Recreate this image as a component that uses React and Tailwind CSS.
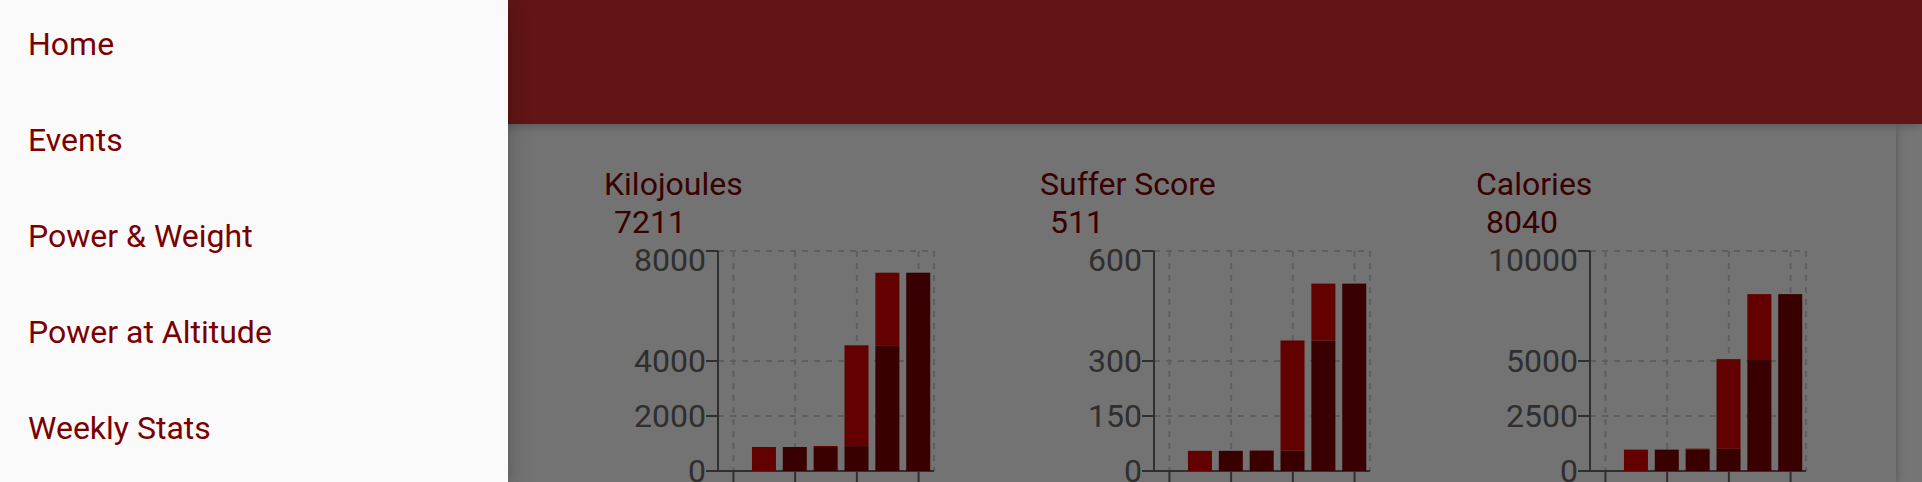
const navItems = ["Home", "Events", "Power & Weight", "Power at Altitude", "Weekly Stats"];

// Each day is [carried-over total, gain for the day].
const charts = [
  {
    title: "Kilojoules",
    total: 7211,
    max: 8000,
    ticks: [8000, 4000, 2000, 0],
    days: [[0, 0], [0, 872], [872, 0], [872, 37], [905, 3665], [4570, 2641], [7211, 0]],
  },
  {
    title: "Suffer Score",
    total: 511,
    max: 600,
    ticks: [600, 300, 150, 0],
    days: [[0, 0], [0, 55], [55, 0], [55, 1], [56, 300], [356, 155], [511, 0]],
  },
  {
    title: "Calories",
    total: 8040,
    max: 10000,
    ticks: [10000, 5000, 2500, 0],
    days: [[0, 0], [0, 972], [972, 0], [972, 43], [1010, 4075], [5085, 2955], [8040, 0]],
  },
];

const plot = { left: 114, top: 10, width: 216, height: 220 };
const right = plot.left + plot.width;
const bottom = plot.top + plot.height;

function Chart({ title, total, max, ticks, days }) {
  const band = plot.width / days.length;
  const center = (i) => plot.left + band * (i + 0.5);
  const y = (v) => bottom - (v / max) * plot.height;
  const labelled = days.map((_, i) => i).filter((i) => i % 2 === 0);

  return (
    <article className="min-w-0">
      <h2 className="whitespace-nowrap">{title}</h2>
      <p className="pl-2.5">{total}</p>
      <svg className="block w-full" height="241" role="img" aria-label={title}>
        <g stroke="#ccc" strokeWidth="2" strokeDasharray="6 6">
          {ticks.map((t) => (
            <line key={t} x1={plot.left} x2={right} y1={y(t)} y2={y(t)} />
          ))}
          {labelled.map((i) => (
            <line key={i} x1={center(i)} x2={center(i)} y1={plot.top} y2={bottom} />
          ))}
          <line x1={right} x2={right} y1={plot.top} y2={bottom} />
        </g>
        <g stroke="#666" strokeWidth="2">
          <line x1={plot.left} x2={right} y1={bottom} y2={bottom} />
          {labelled.map((i) => (
            <line key={i} x1={center(i)} x2={center(i)} y1={bottom} y2={bottom + 12} />
          ))}
          <line x1={plot.left} x2={plot.left} y1={plot.top} y2={bottom} />
          {ticks.map((t) => (
            <line key={t} x1={plot.left - 12} x2={plot.left} y1={y(t)} y2={y(t)} />
          ))}
        </g>
        <g fill="#666" textAnchor="end">
          {ticks.map((t) => (
            <text key={t} x={plot.left - 12} y={t === max ? plot.top + 20 : y(t) + 11}>
              {t}
            </text>
          ))}
        </g>
        {days.map(([base, gain], i) => {
          const x = plot.left + band * (i + 0.1);
          return (
            <g key={i}>
              <rect x={x} y={y(base)} width="24" height={bottom - y(base)} fill="#7a0000" />
              <rect x={x} y={y(base + gain)} width="24" height={y(base) - y(base + gain)} fill="#d80000" />
            </g>
          );
        })}
      </svg>
    </article>
  );
}

export default function App() {
  return (
    <div className="relative flex h-screen flex-col overflow-hidden bg-white font-[Roboto,sans-serif] text-[32px] leading-[38px] text-[#7a0000]">
      <header className="z-10 h-[124px] shrink-0 bg-[#d32f2f] shadow-[0_2px_12px_rgba(0,0,0,0.12),0_2px_8px_rgba(0,0,0,0.12)]" />
      <main className="flex-1 pl-[508px] pr-[26px]">
        <section className="grid min-h-full grid-cols-3 gap-4 bg-[#fafafa] pt-[41px] pl-24 shadow-[0_2px_12px_rgba(0,0,0,0.16),0_2px_8px_rgba(0,0,0,0.16)]">
          {charts.map((chart) => (
            <Chart key={chart.title} {...chart} />
          ))}
        </section>
      </main>
      <div className="absolute inset-0 z-20 bg-black/54" />
      <nav className="absolute inset-y-0 left-0 z-30 w-[508px] bg-[#fafafa] shadow-[0_6px_20px_rgba(0,0,0,0.26)]">
        <ul className="flex flex-col gap-2">
          {navItems.map((item) => (
            <li key={item}>
              <a href="#" className="block px-7 leading-[88px]">
                {item}
              </a>
            </li>
          ))}
        </ul>
      </nav>
    </div>
  );
}
